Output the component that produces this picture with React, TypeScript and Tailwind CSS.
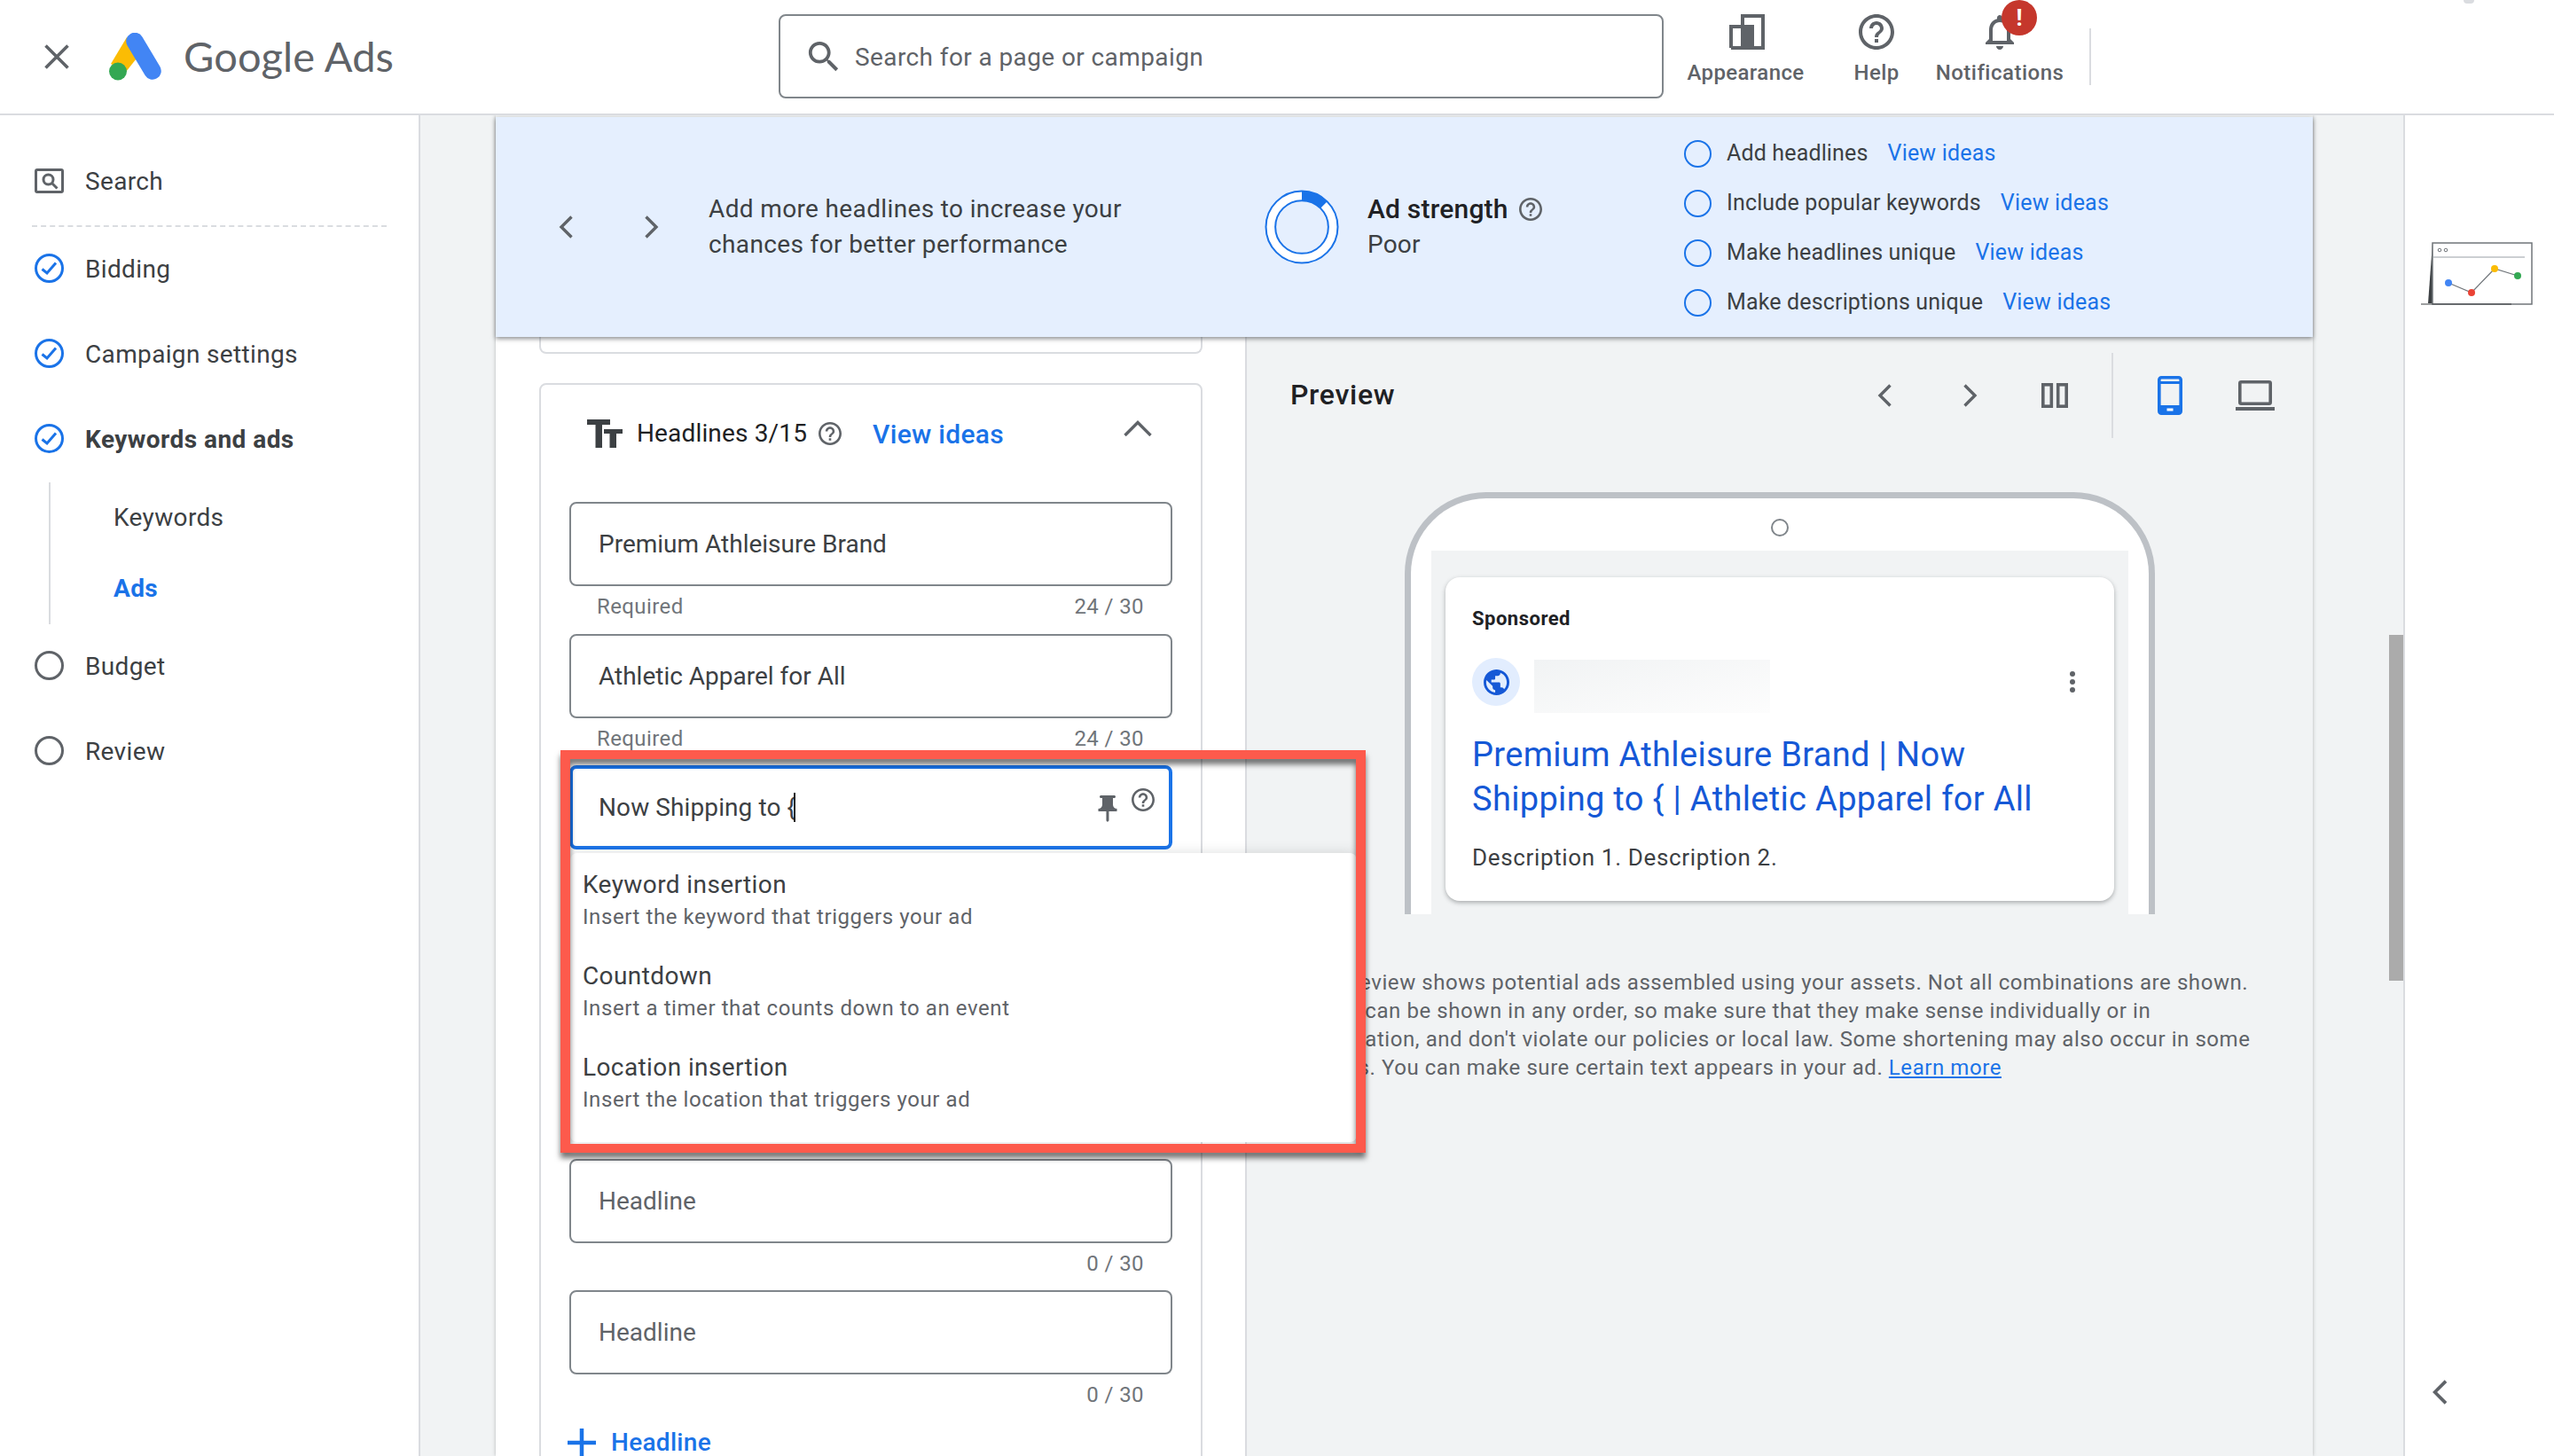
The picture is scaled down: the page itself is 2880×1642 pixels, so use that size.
import React from "react";

const HELP = "M11 18h2v-2h-2v2zm1-16C6.48 2 2 6.48 2 12s4.48 10 10 10 10-4.48 10-10S17.52 2 12 2zm0 18c-4.41 0-8-3.59-8-8s3.59-8 8-8 8 3.59 8 8-3.59 8-8 8zm0-14c-2.21 0-4 1.79-4 4h2c0-1.1.9-2 2-2s2 .9 2 2c0 2-3 1.75-3 5h2c0-2.25 3-2.5 3-5 0-2.21-1.79-4-4-4z";

function Help({ size, className }: { size: number; className?: string }) {
  return (
    <svg width={size} height={size} viewBox="2 2 20 20" className={className} fill="currentColor">
      <path d={HELP} />
    </svg>
  );
}

function Chevron({ dir, className }: { dir: "left" | "right" | "up"; className?: string }) {
  if (dir === "up")
    return (
      <svg width="32" height="18" viewBox="0 0 32 18" className={className} fill="none" stroke="currentColor" strokeWidth="3.4">
        <path d="M1.5 17 16 2.5 30.5 17" />
      </svg>
    );
  return (
    <svg width="16" height="26" viewBox="0 0 16 26" className={className} fill="none" stroke="currentColor" strokeWidth="3.4">
      <path d={dir === "left" ? "M14.5 1.5 3 13l11.5 11.5" : "M1.5 1.5 13 13 1.5 24.5"} />
    </svg>
  );
}

function Check() {
  return (
    <svg width="33" height="33" viewBox="0 0 33 33" className="mb-[4px] shrink-0" fill="none" stroke="#1a73e8" strokeWidth="3">
      <circle cx="16.5" cy="16.5" r="15" />
      <path d="M8.5 17.5l5.5 4.5 10-11.5" />
    </svg>
  );
}

function Empty() {
  return (
    <svg width="33" height="33" viewBox="0 0 33 33" className="mb-[4px] shrink-0" fill="none" stroke="#5f6368" strokeWidth="3">
      <circle cx="16.5" cy="16.5" r="15" />
    </svg>
  );
}

function Sidebar() {
  const row = "h-[96px] flex items-center pl-[39px] gap-[24px] text-[28px] text-[#3c4043] tracking-[0.35px]";
  return (
    <aside className="w-[474px] shrink-0 bg-white border-r-2 border-[#dadce0]">
      <div className="pt-[56px] pl-[39px] h-[124px] flex items-start gap-[24px] text-[28px] text-[#3c4043] tracking-[0.35px]">
        <div className="h-[38px] flex items-center gap-[24px]">
          <svg width="33" height="28" viewBox="0 0 33 28" fill="none" stroke="#5f6368" strokeWidth="3" className="mb-[2px] shrink-0">
            <rect x="1.5" y="1.5" width="30" height="25" rx="1.5" />
            <circle cx="15.5" cy="12.5" r="5.5" />
            <path d="M19.5 16.5l6 6" />
          </svg>
          <span>Search</span>
        </div>
      </div>
      <div className="ml-[36px] w-[400px] border-t-2 border-dashed border-[#dadce0]" />
      <div className={row}><Check /><span>Bidding</span></div>
      <div className={row}><Check /><span>Campaign settings</span></div>
      <div className={row}><Check /><span className="font-bold tracking-[0.45px]">Keywords and ads</span></div>
      <div className="ml-[55px] border-l-2 border-[#dadce0] h-[160px] pl-[71px] text-[28px] tracking-[0.35px]">
        <div className="h-[80px] flex items-center text-[#3c4043]">Keywords</div>
        <div className="h-[80px] flex items-center font-bold text-[#1a73e8]">Ads</div>
      </div>
      <div className={row}><Empty /><span>Budget</span></div>
      <div className={row}><Empty /><span>Review</span></div>
    </aside>
  );
}

function Header() {
  return (
    <header className="h-[130px] shrink-0 bg-white border-b-2 border-[#dadce0] flex items-start relative">
      <div className="w-[878px] shrink-0 h-full flex items-center pl-[50px]">
        <svg width="28" height="28" viewBox="0 0 28 28" stroke="#5f6368" strokeWidth="3.6">
          <path d="M1.5 1.5l25 25M26.5 1.5l-25 25" />
        </svg>
        <svg width="61" height="54" viewBox="0 0 61 54" className="ml-[43px]">
          <path d="M4 35 22 5 40 20 21 44z" fill="#fbbc04" />
          <path d="M31 9.500 51 43" stroke="#4285f4" strokeWidth="19.500" strokeLinecap="round" />
          <circle cx="12" cy="43.500" r="10" fill="#34a853" />
        </svg>
        <span className="ml-[25px] text-[47px] leading-none text-[#5f6368] font-['Lato',sans-serif] mb-[2px] tracking-[0.1px]">Google Ads</span>
      </div>
      <div className="mt-[16px] w-[998px] h-[95px] border-2 border-[#80868b] rounded-[8px] flex items-center pl-[29px]">
        <svg width="46" height="46" viewBox="2 2 20 20" fill="#5f6368" className="ml-[1px] mt-[1px] w-[38px] h-[38px]">
          <path d="M15.5 14h-.79l-.28-.27C15.41 12.59 16 11.11 16 9.5 16 5.91 13.09 3 9.5 3S3 5.91 3 9.5 5.91 16 9.5 16c1.61 0 3.09-.59 4.23-1.57l.27.28v.79l5 4.99L20.49 19l-4.99-5zm-6 0C7.01 14 5 11.99 5 9.5S7.01 5 9.5 5 14 7.01 14 9.5 11.99 14 9.5 14z" />
        </svg>
        <span className="ml-[16px] mt-[2px] text-[28px] text-[#5f6368] tracking-[0.4px]">Search for a page or campaign</span>
      </div>
      <div className="flex flex-col items-center ml-[26px] pt-[16px] w-[133px]">
        <svg width="40" height="40" viewBox="0 0 40 40" className="ml-[2px]" fill="none">
          <path d="M2 38V14h13M15 38V2h23v36H2" stroke="#5f6368" strokeWidth="4" />
          <rect x="13" y="12" width="15" height="28" fill="#5f6368" />
        </svg>
        <span className="mt-[10px] text-[24px] leading-[32px] font-medium text-[#5f6368] tracking-[0.4px] whitespace-nowrap">Appearance</span>
      </div>
      <div className="flex flex-col items-center ml-[55px] pt-[16px] w-[52px] text-[#5f6368]">
        <Help size={40} />
        <span className="mt-[10px] text-[24px] leading-[32px] font-medium tracking-[0.4px]">Help</span>
      </div>
      <div className="relative flex flex-col items-center ml-[40px] pt-[12px] w-[146px] text-[#5f6368]">
        <svg width="48" height="48" viewBox="0 0 24 24" fill="currentColor">
          <path d="M12 22c1.1 0 2-.9 2-2h-4c0 1.1.89 2 2 2zm6-6v-5c0-3.070-1.640-5.640-4.500-6.320V4c0-.83-.67-1.500-1.500-1.500s-1.500.67-1.500 1.500v.68C7.630 5.360 6 7.920 6 11v5l-2 2v1h16v-1l-2-2zm-2 1H8v-6c0-2.480 1.510-4.500 4-4.500s4 2.020 4 4.500v6z" />
        </svg>
        <span className="mt-[6px] text-[24px] leading-[32px] font-medium tracking-[0.5px] whitespace-nowrap">Notifications</span>
        <span className="absolute left-[75px] top-0 w-[40px] h-[40px] rounded-full bg-[#c5372c] text-white text-[26px] font-bold flex items-center justify-center leading-none">!</span>
      </div>
      <div className="ml-[28px] mt-[32px] w-[2px] h-[64px] bg-[#dadce0]" />
    </header>
  );
}

function Tip({ text }: { text: string }) {
  return (
    <div className="h-[56px] flex items-center text-[25px] text-[#3c4043]">
      <span className="w-[31px] h-[31px] rounded-full border-2 border-[#1a73e8] shrink-0" />
      <span className="ml-[17px] tracking-[0.15px] whitespace-nowrap">{text}</span>
      <span className="ml-[22px] text-[#1a73e8] tracking-[0.2px] whitespace-nowrap">View ideas</span>
    </div>
  );
}

function Banner() {
  return (
    <div className="relative z-30 h-[248px] shrink-0 bg-[#e5effe] flex items-center shadow-[0_2px_5px_rgba(60,64,67,0.6)] mt-[2px]">
      <Chevron dir="left" className="ml-[71px] text-[#5f6368]" />
      <Chevron dir="right" className="ml-[81px] text-[#5f6368]" />
      <p className="ml-[56px] w-[510px] text-[28px] leading-[40px] text-[#3c4043] tracking-[0.36px]">
        Add more headlines to increase your chances for better performance
      </p>
      <svg width="84" height="84" viewBox="0 0 83 83" className="ml-[117px] shrink-0">
        <circle cx="41.5" cy="41.500" r="40" fill="#fff" stroke="#1a73e8" strokeWidth="2" />
        <circle cx="41.5" cy="41.500" r="29.500" fill="#e5effe" stroke="#1a73e8" strokeWidth="2" />
        <path d="M41.500 1.500A40 40 0 0 1 69.800 13.200L62.400 20.600A29.500 29.500 0 0 0 41.500 12z" fill="#1a73e8" />
      </svg>
      <div className="ml-[32px] w-[357px] shrink-0 text-[28px] leading-[40px] tracking-[0.2px]">
        <div className="flex items-center">
          <span className="font-medium text-[30px] text-[#202124]">Ad strength</span>
          <Help size={26} className="ml-[12px] text-[#5f6368]" />
        </div>
        <div className="text-[#3c4043]">Poor</div>
      </div>
      <div className="flex flex-col mt-[2px]">
        <Tip text="Add headlines" />
        <Tip text="Include popular keywords" />
        <Tip text="Make headlines unique" />
        <Tip text="Make descriptions unique" />
      </div>
    </div>
  );
}

function Field({ value, placeholder, required, count, extra }: { value?: string; placeholder?: string; required?: boolean; count: string; extra?: string }) {
  return (
    <div className={`relative h-[148px] ${extra ?? ""}`}>
      <div className={`h-[95px] rounded-[8px] border-2 border-[#80868b] flex items-center pl-[31px] pt-[1px] text-[28px] bg-white ${value ? "text-[#3c4043]" : "text-[#5f6368]"}`}>
        {value ?? placeholder}
      </div>
      <div className="h-[45px] flex items-center justify-between pl-[31px] pr-[32px] text-[24px] text-[#70757a] tracking-[0.4px]">
        <span>{required ? "Required" : ""}</span>
        <span>{count}</span>
      </div>
    </div>
  );
}

function Menu() {
  const items = [
    ["Keyword insertion", "Insert the keyword that triggers your ad"],
    ["Countdown", "Insert a timer that counts down to an event"],
    ["Location insertion", "Insert the location that triggers your ad"],
  ];
  return (
    <div className="absolute left-[1px] top-[99px] w-[887px] h-[326px] bg-white rounded-[8px] shadow-[0_0_14px_rgba(60,64,67,0.18)] z-10 pt-[17px] pl-[14px]">
      {items.map(([a, b]) => (
        <div key={a} className="h-[103px]">
          <div className="text-[28px] leading-[38px] text-[#3c4043] tracking-[0.4px]">{a}</div>
          <div className="text-[24px] leading-[34px] text-[#5f6368] tracking-[0.58px]">{b}</div>
        </div>
      ))}
    </div>
  );
}

function Editor() {
  return (
    <div className="relative z-20 w-[847px] shrink-0 bg-white border-r-2 border-[#dadce0] pl-[49px]">
      <div className="w-[748px] h-[19px] border-2 border-t-0 border-[#dadce0] rounded-b-[8px]" />
      <div className="mt-[33px] w-[748px] h-[1400px] border-2 border-[#dadce0] rounded-[8px] pl-[32px] pr-[32px]">
        <div className="h-[110px] mb-[22px] flex items-center text-[#202124]">
          <svg width="40" height="32" viewBox="0 0 40 32" fill="#3c4043" className="ml-[20px] shrink-0">
            <path d="M0 0h26v6H17V32H9.500V6H0zM19 11h21v5H33V32h-7.500V16H19z" />
          </svg>
          <span className="ml-[16px] text-[28px] tracking-[0.15px] whitespace-nowrap">Headlines 3/15</span>
          <Help size={26} className="ml-[13px] text-[#5f6368]" />
          <span className="ml-[35px] text-[30px] font-medium text-[#1a73e8] tracking-[0.3px]">View ideas</span>
          <Chevron dir="up" className="ml-auto mr-[23px] mb-[12px] text-[#5f6368]" />
        </div>
        <Field value="Premium Athleisure Brand" required count="24 / 30" extra="mb-[1px]" />
        <Field value="Athletic Apparel for All" required count="24 / 30" />
        <div className="relative h-[148px]">
          <div className="h-[95px] rounded-[8px] border-[4px] border-[#1a73e8] flex items-center pl-[29px] text-[28px] text-[#3c4043] bg-white relative">
            <span className="tracking-[0.1px]">Now Shipping to {"{"}</span>
            <span className="w-[2px] h-[33px] bg-[#202124] -ml-[2px]" />
            <svg width="30" height="30" viewBox="5 2 14 20" fill="#5f6368" className="absolute left-[588px] top-[30px]">
              <path d="M16 9V4h1c.55 0 1-.45 1-1s-.45-1-1-1H7c-.55 0-1 .45-1 1s.45 1 1 1h1v5c0 1.660-1.340 3-3 3v2h5.970v7l1 1 1-1v-7H19v-2c-1.660 0-3-1.340-3-3z" />
            </svg>
            <Help size={26} className="absolute left-[630px] top-[22px] text-[#5f6368]" />
          </div>
          <Menu />
          <div className="absolute -left-[10px] -top-[17px] w-[908px] h-[454px] border-x-[11px] border-y-[10px] border-[#fd5a4c] z-20 pointer-events-none drop-shadow-[0_6px_3px_rgba(0,0,0,0.55)]" />
        </div>
        <Field placeholder="Headline" count="0 / 30" />
        <Field placeholder="Headline" count="0 / 30" />
        <Field placeholder="Headline" count="0 / 30" />
        <Field placeholder="Headline" count="0 / 30" />
        <div className="mt-[9px] -ml-[2px] flex items-center h-[30px] text-[28px] font-medium text-[#1a73e8] tracking-[0.3px]">
          <svg width="32" height="32" viewBox="0 0 32 32" stroke="#1a73e8" strokeWidth="4.500">
            <path d="M16 0v32M0 16h32" />
          </svg>
          <span className="ml-[17px]">Headline</span>
        </div>
      </div>
    </div>
  );
}

function Preview() {
  return (
    <div className="flex-1 bg-[#f1f3f4] min-w-0 pt-[18px]">
      <div className="h-[96px] flex items-center pl-[49px] text-[#5f6368]">
        <span className="w-[662px] shrink-0 text-[32px] font-medium text-[#202124] tracking-[0.7px] -mt-[2px]">Preview</span>
        <Chevron dir="left" />
        <Chevron dir="right" className="ml-[81px]" />
        <svg width="30" height="28" viewBox="0 0 30 28" fill="none" stroke="currentColor" strokeWidth="3.600" className="ml-[72px]">
          <rect x="1.800" y="1.800" width="9.500" height="24.400" />
          <rect x="18.700" y="1.800" width="9.500" height="24.400" />
        </svg>
        <div className="ml-[49px] w-[2px] h-[96px] bg-[#dadce0]" />
        <svg width="28" height="44" viewBox="0 0 28 44" className="ml-[50px]" fill="none">
          <rect x="1.800" y="1.800" width="24.400" height="40.400" rx="2.500" stroke="#1a73e8" strokeWidth="3.600" />
          <rect x="2" y="6" width="24" height="3" fill="#1a73e8" />
          <path d="M2 33h24v9.500H2z" fill="#1a73e8" />
          <rect x="10.500" y="36.500" width="7" height="3" fill="#fff" />
        </svg>
        <svg width="44" height="34" viewBox="0 0 44 34" className="ml-[60px]" fill="none">
          <rect x="4.800" y="1.800" width="34.400" height="24.400" rx="1.500" stroke="#5f6368" strokeWidth="3.600" />
          <rect x="0" y="30" width="44" height="4" fill="#5f6368" />
        </svg>
      </div>
      <div className="mt-[61px] ml-[178px] w-[846px] h-[476px] border-x-[7px] border-t-[7px] border-[#bdc1c6] rounded-t-[92px] bg-white flex flex-col">
        <div className="mt-[23px] mx-auto w-[20px] h-[20px] rounded-full border-2 border-[#80868b]" />
        <div className="mt-[16px] mx-[23px] flex-1 bg-[#f1f3f4] pt-[30px] px-[16px]">
          <div className="h-[365px] bg-white rounded-[16px] shadow-[0_2px_5px_rgba(60,64,67,0.4)] pl-[30px] pr-[45px] relative">
            <div className="pt-[33px] text-[22px] leading-[28px] font-bold text-[#202124] tracking-[0.5px]">Sponsored</div>
            <div className="flex items-start mt-[30px]">
              <span className="w-[54px] h-[54px] rounded-full bg-[#e2edfe] flex items-center justify-center">
                <svg width="29" height="29" viewBox="2 2 20 20" fill="#1558d6">
                  <path d="M12 2C6.480 2 2 6.480 2 12s4.480 10 10 10 10-4.480 10-10S17.520 2 12 2zm-1 17.930c-3.950-.49-7-3.850-7-7.930 0-.62.08-1.210.21-1.790L9 15v1c0 1.100.9 2 2 2v1.930zm6.900-2.540c-.26-.81-1-1.390-1.900-1.390h-1v-3c0-.55-.45-1-1-1H8v-2h2c.55 0 1-.45 1-1V7h2c1.100 0 2-.9 2-2v-.41c2.930 1.190 5 4.060 5 7.410 0 2.080-.8 3.970-2.100 5.390z" />
                </svg>
              </span>
              <span className="ml-[16px] mt-[2px] w-[266px] h-[60px] bg-gradient-to-br from-[#f1f3f4] to-[#fdfdfd]" />
              <svg width="8" height="26" viewBox="0 0 8 26" fill="#5f6368" className="ml-auto mt-[14px] -mr-[2px]">
                <circle cx="4" cy="4" r="3" /><circle cx="4" cy="13" r="3" /><circle cx="4" cy="22" r="3" />
              </svg>
            </div>
            <div className="mt-[22px] text-[38px] tracking-[0.33px] leading-[50px] text-[#1558d6] w-[660px]">
              Premium Athleisure Brand | Now Shipping to {"{"} | Athletic Apparel for All
            </div>
            <div className="mt-[25px] text-[26px] leading-[32px] text-[#3c4043] tracking-[0.65px]">Description 1. Description 2.</div>
          </div>
        </div>
      </div>
      <p className="mt-[61px] pl-[50px] w-[1142px] text-[24px] leading-[32px] text-[#5f6368] tracking-[0.57px]">
        This preview shows potential ads assembled using your assets. Not all combinations are shown. Assets can be shown in any order, so make sure that they make sense individually or in combination, and don't violate our policies or local law. Some shortening may also occur in some formats. You can make sure certain text appears in your ad. <span className="text-[#1a73e8] underline">Learn more</span>
      </p>
    </div>
  );
}

export default function App() {
  return (
    <div className="relative w-[2880px] h-[1642px] overflow-hidden bg-white flex flex-col font-['Roboto',sans-serif]">
      <Header />
      <div className="flex-1 min-h-0 flex">
        <Sidebar />
        <main className="relative w-[2238px] shrink-0 bg-[#f1f3f4] pl-[85px] border-r-2 border-[#dadce0] overflow-hidden">
          <div className="w-[2049px] h-full flex flex-col shadow-[0_0_4px_rgba(60,64,67,0.35)]">
            <Banner />
            <div className="flex-1 min-h-0 flex">
              <Editor />
              <Preview />
            </div>
          </div>
          <div className="absolute right-0 top-[586px] w-[16px] h-[390px] bg-[#ababab]" />
        </main>
        <div className="relative flex-1">
          <svg width="128" height="72" viewBox="0 0 128 72" className="ml-[17px] mt-[143px]" fill="none">
            <path d="M14 1 L9 69 H14z" fill="#3c4043" />
            <rect x="14" y="1" width="112" height="69" stroke="#70757a" strokeWidth="1.500" />
            <path d="M14 17H118" stroke="#9aa0a6" strokeWidth="1.200" />
            <path d="M1 70H103" stroke="#3c4043" strokeWidth="1.200" />
            <circle cx="22" cy="9" r="1.800" stroke="#70757a" strokeWidth="1" />
            <circle cx="29" cy="9" r="1.800" stroke="#70757a" strokeWidth="1" />
            <path d="M32 46 58 57 84 30 110 38" stroke="#70757a" strokeWidth="1.200" />
            <circle cx="32" cy="46" r="4" fill="#4285f4" />
            <circle cx="58" cy="57" r="4" fill="#ea4335" />
            <circle cx="84" cy="30" r="4" fill="#fbbc04" />
            <circle cx="110" cy="38" r="4" fill="#34a853" />
          </svg>
          <Chevron dir="left" className="absolute left-[30px] top-[1426px] w-[18px] h-[28px] text-[#5f6368]" />
          <div className="absolute left-[66px] -top-[130px] w-[12px] h-[4px] rounded-b-full bg-[#dadce0]" />
        </div>
      </div>
    </div>
  );
}
